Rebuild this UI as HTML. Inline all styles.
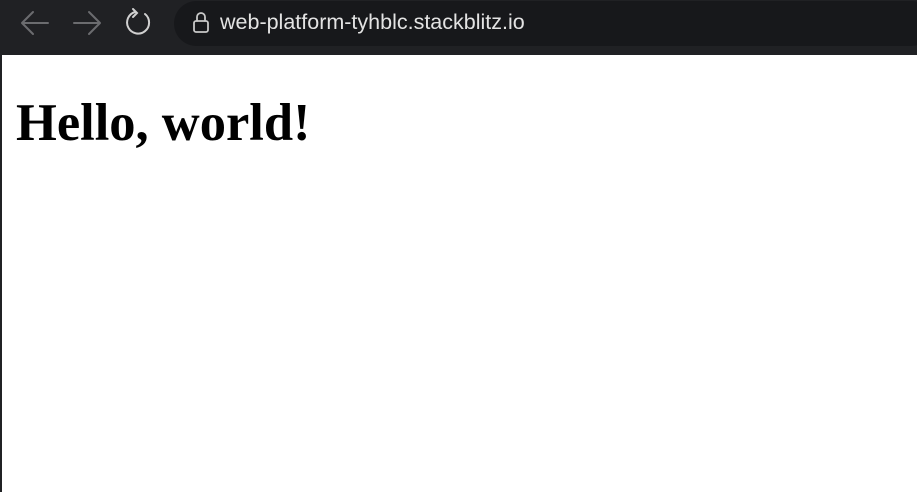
<!DOCTYPE html><html><head><style>
body{margin:0;width:917px;height:492px;overflow:hidden;background:#fff;position:relative;font-family:"Liberation Sans",sans-serif}
.bar{position:absolute;left:0;top:0;width:917px;height:55px;background:#202124}
.pill{position:absolute;left:174px;top:1px;width:760px;height:45px;border-radius:23px;background:#17181b}
.url{position:absolute;left:220px;top:10px;font-size:21.5px;color:#e3e3e3}
.side{position:absolute;left:0;top:55px;width:2px;height:437px;background:#202124}
h1{position:absolute;left:16px;top:93px;margin:0;font-family:"Liberation Serif",serif;font-size:52.5px;font-weight:bold;color:#000}
</style></head><body>
<div class="bar"><div class="pill"></div>
<svg width="917" height="55" style="position:absolute;left:0;top:0" fill="none" stroke-linecap="round">
<path d="M22 23H48M22 23L33 12M22 23L33 34" stroke="#6b6c6f" stroke-width="2"/>
<path d="M74 23H100M100 23L89 12M100 23L89 34" stroke="#6b6c6f" stroke-width="2"/>
<path d="M135 12A11 11 0 1 0 145 14" stroke="#d0d0d0" stroke-width="2"/>
<path d="M133 9L137 13L133 17" stroke="#d0d0d0" stroke-width="2"/>
<rect x="194" y="21" width="14" height="11" rx="2" stroke="#c8c8c8" stroke-width="1.8"/>
<path d="M197 21V17A4 4 0 0 1 205 17V21" stroke="#c8c8c8" stroke-width="1.8"/>
</svg>
<div class="url">web-platform-tyhblc.stackblitz.io</div></div>
<div class="side"></div>
<h1>Hello, world!</h1>
</body></html>
